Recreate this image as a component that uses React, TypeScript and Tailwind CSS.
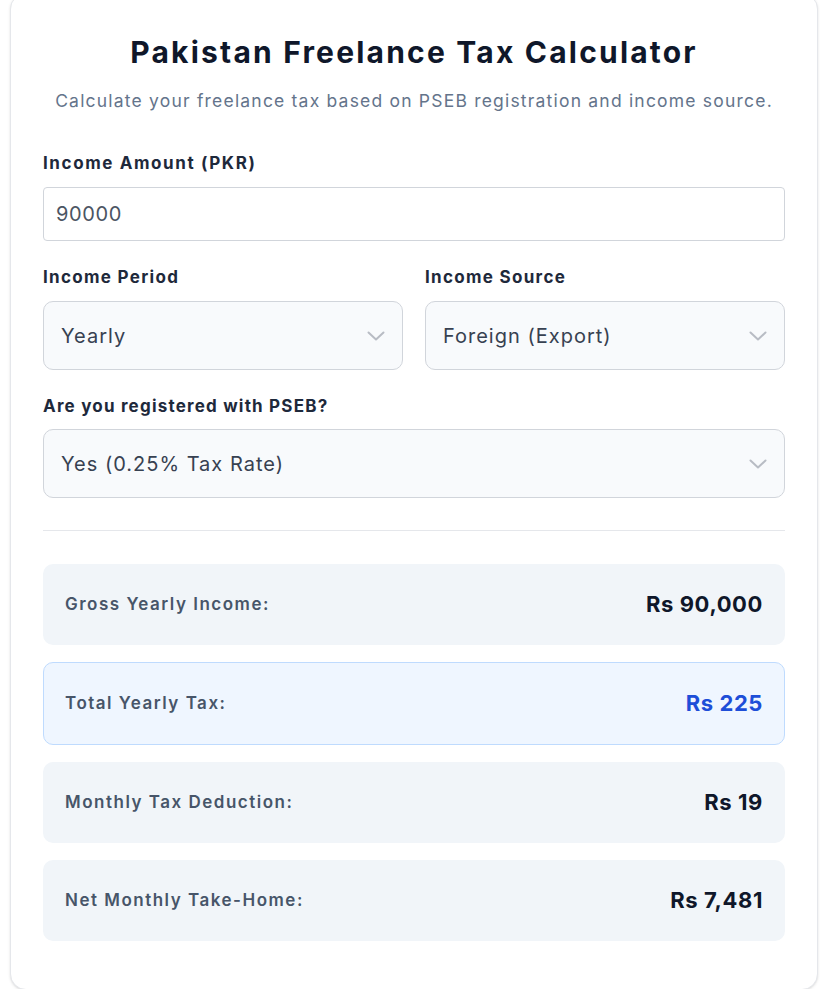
import { useState } from 'react'

function Chevron() {
  return (
    <svg width="18" height="10" viewBox="0 0 18 10" fill="none" className="shrink-0">
      <polyline points="1.5,1.5 9,8.5 16.5,1.5" stroke="#b8bcc4" strokeWidth="2" strokeLinecap="round" strokeLinejoin="round" />
    </svg>
  )
}

function SelectBox({ value }: { value: string }) {
  return (
    <div className="h-[69px] w-full flex items-center justify-between pl-[17px] pr-[17px] bg-[#f8fafc] border border-[#d1d5db] rounded-[10px] cursor-pointer">
      <span className="text-[20px] tracking-[1px] text-[#374151]">{value}</span>
      <Chevron />
    </div>
  )
}

function ResultRow({ label, value, highlight }: { label: string; value: string; highlight?: boolean }) {
  return (
    <div
      className={
        highlight
          ? 'h-[83px] flex items-center justify-between px-[21px] rounded-[10px] bg-[#eff6ff] border border-[#bfdbfe]'
          : 'h-[81px] flex items-center justify-between px-[22px] rounded-[10px] bg-[#f1f5f9]'
      }
    >
      <span className="text-[17px] font-semibold text-[#475569] tracking-[1.5px]">{label}</span>
      <span
        className={
          highlight
            ? 'text-[22px] font-bold tracking-[0.6px] text-[#1d4ed8]'
            : 'text-[22px] font-bold tracking-[0.6px] text-[#0f172a]'
        }
      >
        {value}
      </span>
    </div>
  )
}

export default function App() {
  const [amount, setAmount] = useState('90000')

  return (
    <div className="min-h-screen bg-white" style={{ fontFamily: 'Inter, "Noto Sans", sans-serif' }}>
      <div className="ml-[10px] w-[808px] -mt-[7px] bg-white border border-[#e5e7eb] rounded-2xl shadow-sm px-8 pt-[40px] pb-[48px]">
        <h1 className="text-[30px] leading-[36px] font-bold text-center text-[#0f172a] tracking-[2.2px]">
          Pakistan Freelance Tax Calculator
        </h1>
        <p className="mt-[18px] text-[17.5px] leading-[26px] text-center text-[#64748b] tracking-[1.2px]">
          Calculate your freelance tax based on PSEB registration and income source.
        </p>

        <label className="block mt-[37px] text-[17px] leading-[24px] font-bold text-[#1e293b] tracking-[1.6px]">
          Income Amount (PKR)
        </label>
        <input
          value={amount}
          onChange={(e) => setAmount(e.target.value)}
          className="mt-[12px] block w-full h-[54px] px-[12px] border border-[#d1d5db] rounded-[4px] text-[20px] tracking-[0.6px] text-[#4b5563] bg-white outline-none"
        />

        <div className="mt-[24px] grid grid-cols-2 gap-[22px]">
          <div>
            <label className="block text-[17px] leading-[24px] font-bold text-[#1e293b] tracking-[1.3px]">Income Period</label>
            <div className="mt-[12px]">
              <SelectBox value="Yearly" />
            </div>
          </div>
          <div>
            <label className="block text-[17px] leading-[24px] font-bold text-[#1e293b] tracking-[1.3px]">Income Source</label>
            <div className="mt-[12px]">
              <SelectBox value="Foreign (Export)" />
            </div>
          </div>
        </div>

        <label className="block mt-[24px] text-[17px] leading-[24px] font-bold text-[#1e293b] tracking-[1.2px]">
          Are you registered with PSEB?
        </label>
        <div className="mt-[11px]">
          <SelectBox value="Yes (0.25% Tax Rate)" />
        </div>

        <div className="mt-[32px] border-t border-[#e5e7eb]" />

        <div className="mt-[33px] flex flex-col gap-[17px]">
          <ResultRow label="Gross Yearly Income:" value="Rs 90,000" />
          <ResultRow label="Total Yearly Tax:" value="Rs 225" highlight />
          <ResultRow label="Monthly Tax Deduction:" value="Rs 19" />
          <ResultRow label="Net Monthly Take-Home:" value="Rs 7,481" />
        </div>
      </div>
    </div>
  )
}
